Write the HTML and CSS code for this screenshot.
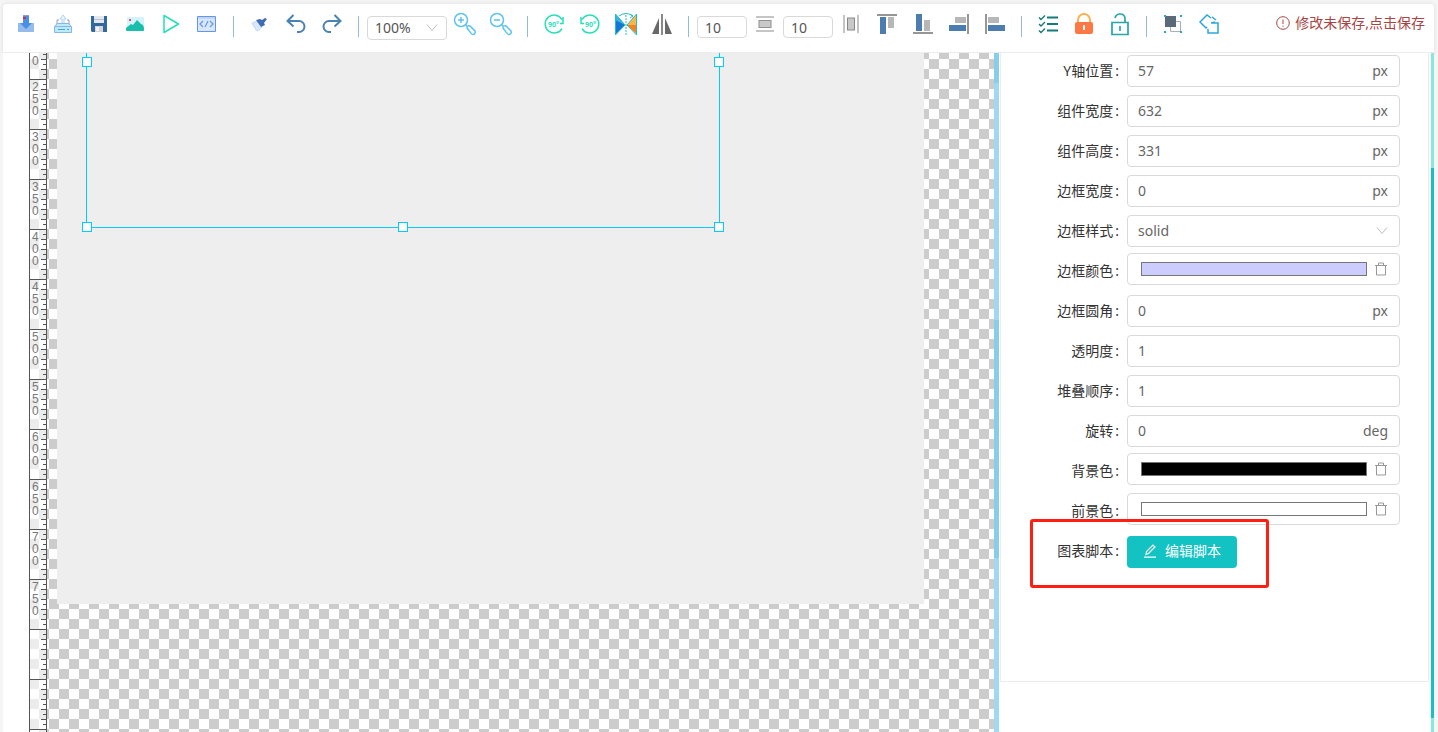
FILE: index.html
```html
<!DOCTYPE html>
<html lang="zh-CN">
<head>
<meta charset="utf-8">
<title>图表设计器</title>
<link rel="stylesheet" href="styles.css">
</head>
<body>
<div class="app">
<header class="toolbar">
  <button class="tool" aria-label="导入"><svg viewBox="0 0 20 20"><path fill="#93bbec" d="M1 9h16v9H1z"/><path fill="#4a90e2" d="M6 2h6v7h3l-6 6-6-6h3z"/><path fill="#8fa0c8" d="M6 1h6v1H6z"/><path fill="#e02b3a" d="M6 3h3v2H6z"/></svg></button>
  <button class="tool" aria-label="导出"><svg viewBox="0 0 20 20" fill="none"><path stroke="#9d96d6" d="M6 6H4v5M14 6h2v5"/><path fill="#eef8fd" stroke="#a9d5f7" d="M10 1l3 4h-2v6H9V5H7z"/><path fill="#b9ecf8" stroke="#8bb4e8" d="M1.500 12.500h17v6h-17zM4 9.500h12l2 3H2z"/><path stroke="#4f9fdc" d="M5 15.500h7M14 15.500h2"/></svg></button>
  <button class="tool" aria-label="保存"><svg viewBox="0 0 20 20"><path fill="#31689f" d="M2 2h16v16H3l-1-1z"/><path fill="#e3e8ef" d="M5 2h10v7H5z"/><path fill="#bac3d0" d="M5 5h10v1H5z"/><path fill="#d6d6d6" d="M6 12h8v6H6z"/><path fill="#f3f3f3" d="M7 13h3v4H7z"/></svg></button>
  <button class="tool" aria-label="图片"><svg viewBox="0 0 20 20"><rect x="2" y="3" width="17" height="14" rx="1" fill="#d5f3fc"/><path fill="#1abfac" d="M1 14l5-4 2 1 4-5 4 4 2 1 1 3v2q0 1-1 1H2q-1 0-1-1z"/><path fill="#e55462" d="M4 5h2v2H4z"/></svg></button>
  <button class="tool" aria-label="预览"><svg viewBox="0 0 20 20"><path fill="none" stroke="#26dfb4" stroke-width="1.500" stroke-linejoin="round" d="M3 1.500v17L17.500 10z"/></svg></button>
  <button class="tool" aria-label="代码"><svg viewBox="0 0 20 20" fill="none" stroke="#6495ed"><path fill="#d8e7fb" d="M.5 2.500h18v15H.5z"/><path d="M1 4h17" stroke="#a9c7f5"/><path stroke-width="1.200" d="M6 7l-3 3 3 3M13 7l3 3-3 3M11 7l-3 6"/></svg></button>
  <span class="sep"></span>
  <button class="tool" aria-label="格式刷"><svg viewBox="0 0 20 20"><path fill="#d9e9fc" stroke="#a8c9ee" stroke-width=".6" d="M2 9l5-2 5 6-4 4-2-1-1-2-1-1z"/><path fill="#3f6cb5" d="M6 6l4-1 2 1 3-2 2 1-3 4 1 2-4 2z"/></svg></button>
  <button class="tool" aria-label="撤销"><svg viewBox="0 0 20 20" fill="none" stroke="#4b82b4" stroke-width="2"><path d="M7.500 1L1.500 7l6 5.500M2 7h11a5.500 5.500 0 0 1 0 11h-2"/></svg></button>
  <button class="tool" aria-label="重做"><svg viewBox="0 0 20 20" fill="none" stroke="#4b82b4" stroke-width="2"><path d="M12.500 1l6 6-6 5.500M18 7H7a5.500 5.500 0 0 0 0 11h2"/></svg></button>
  <span class="sep"></span>
  <div class="picker picker-zoom"><select aria-label="缩放"><option>100%</option></select><svg viewBox="0 0 12 12"><path d="M1 2.500l5 6 5-6"/></svg></div>
  <button class="tool" aria-label="放大"><svg class="big" viewBox="0 0 24 24" fill="none" stroke="#5cc4f0" stroke-width="1.500"><circle cx="8" cy="8" r="6.500"/><path d="M5 8h6M8 5v6M12.500 12.500l2 2M14 16q0-3 3-2l5 5q1 3-2 3.500-1 .5-6-6.500z"/></svg></button>
  <button class="tool" aria-label="缩小"><svg class="big" viewBox="0 0 24 24" fill="none" stroke="#5cc4f0" stroke-width="1.500"><circle cx="8" cy="8" r="6.500"/><path d="M5 8h6M12.500 12.500l2 2M14 16q0-3 3-2l5 5q1 3-2 3.500-1 .5-6-6.500z"/></svg></button>
  <span class="sep"></span>
  <button class="tool" aria-label="顺时针旋转"><svg viewBox="0 0 20 20"><path fill="none" stroke="#2bdfb8" stroke-width="1.500" d="M18 14.500A9 9 0 1 1 18 5.500M19 3v6.500h-3"/><text class="deg" x="4" y="12.500">90°</text></svg></button>
  <button class="tool" aria-label="逆时针旋转"><svg viewBox="0 0 20 20"><path fill="none" stroke="#2bdfb8" stroke-width="1.500" d="M2 14.500A9 9 0 1 0 2 5.500M1 3v6.500h3"/><text class="deg" x="5" y="12.500">90°</text></svg></button>
  <button class="tool" aria-label="水平翻转"><svg class="big" viewBox="0 0 24 24"><path fill="#1477d4" d="M1 2l10 11L1 23z"/><path fill="#35b4e8" d="M1 2l10 11-10-5z"/><path fill="#f7b84b" d="M23 2L13 13l10 10z"/><path fill="#f58220" d="M13 13h9v8z"/><path fill="none" stroke="#26bcc4" d="M1.500 2v21l9.500-10zM22.500 2v21L13 13zM5 4q7-5 14 0M16 2l3 2-3 2"/><path stroke="#26bcc4" stroke-dasharray="2 1" d="M12 3v21"/></svg></button>
  <button class="tool" aria-label="镜像"><svg class="big" viewBox="0 0 24 24"><path fill="#696969" d="M9 6v16H2zM15 6v16h7z"/><path fill="#898989" d="M11 2h2v21h-2z"/></svg></button>
  <span class="sep"></span>
  <input class="num" type="text" value="10" aria-label="垂直间距">
  <button class="tool" aria-label="垂直分布"><svg viewBox="0 0 20 20"><path stroke="#b3b3b3" stroke-width="1.500" d="M1 3h18M1 17h18"/><rect x="4" y="6.500" width="12" height="7" fill="#c9c9c9" stroke="#909090"/></svg></button>
  <input class="num" type="text" value="10" aria-label="水平间距">
  <button class="tool" aria-label="水平分布"><svg viewBox="0 0 20 20"><path stroke="#b3b3b3" stroke-width="1.500" d="M3 1v18M17 1v18"/><rect x="6.500" y="4" width="7" height="12" fill="#c9c9c9" stroke="#888"/></svg></button>
  <button class="tool" aria-label="顶部对齐"><svg viewBox="0 0 20 20"><path fill="#969696" d="M0 0h20v2H0z"/><path fill="#4b7db0" d="M3 3h6v17H3z"/><path fill="#b7b7b7" d="M11 3h6v11h-6z"/></svg></button>
  <button class="tool" aria-label="底部对齐"><svg viewBox="0 0 20 20"><path fill="#969696" d="M0 18h20v2H0z"/><path fill="#4b7db0" d="M3 0h6v17H3z"/><path fill="#b7b7b7" d="M11 6h6v11h-6z"/></svg></button>
  <button class="tool" aria-label="右对齐"><svg viewBox="0 0 20 20"><path fill="#969696" d="M18 0h2v20h-2z"/><path fill="#4b7db0" d="M0 11h17v6H0z"/><path fill="#b7b7b7" d="M6 3h11v6H6z"/></svg></button>
  <button class="tool" aria-label="左对齐"><svg viewBox="0 0 20 20"><path fill="#969696" d="M0 0h2v20H0z"/><path fill="#4b7db0" d="M3 11h17v6H3z"/><path fill="#b7b7b7" d="M3 3h11v6H3z"/></svg></button>
  <span class="sep"></span>
  <button class="tool" aria-label="全选"><svg viewBox="0 0 20 20" fill="none" stroke="#147a7c"><path stroke-width="2" d="M9 3.500h11M9 10h11M9 16.500h11"/><path stroke-width="1.400" d="M1 3.500l2 2 4-4M1 10l2 2 4-4M1 16.500l2 2 4-4"/></svg></button>
  <button class="tool" aria-label="锁定"><svg class="big" viewBox="0 0 24 24"><path fill="none" stroke="#ffb04d" stroke-width="2" d="M6 11V8a6 6 0 0 1 12 0v3"/><rect x="3" y="10" width="18" height="12" rx="2" fill="#ff7744"/><path fill="#fff" d="M11 13h2v5h-2z"/></svg></button>
  <button class="tool" aria-label="解锁"><svg class="big" viewBox="0 0 24 24" fill="none" stroke="#25a8a3" stroke-width="1.700"><path d="M4 10.500h16v12H4zM7 6q1-4 5-4 5 0 5 5v3M12 14v5"/></svg></button>
  <span class="sep"></span>
  <button class="tool" aria-label="组合"><svg viewBox="0 0 20 20"><path fill="none" stroke="#a9b1b8" d="M13 7.500h4.500v10h-10V13"/><path fill="#5b6a7a" d="M2 2h11v11H2z"/><path fill="#2ba4dc" d="M1 1h2v2H1zM17 1h2v2h-2zM1 17h2v2H1zM17 17h2v2h-2z"/></svg></button>
  <button class="tool" aria-label="取消组合"><svg viewBox="0 0 20 20" fill="none" stroke="#2ba6dc" stroke-width="1.500"><path d="M12 4L8 1 1 8l6 6 1-1M13 9h6v10H9v-4M12 9l4-1M13 3l4 3"/></svg></button>
  <button class="unsaved"><svg viewBox="0 0 14 14" fill="none" stroke="#a94442"><circle cx="7" cy="7" r="6.300"/><path d="M7 3.500v4.500M7 9.500v1.200"/></svg>修改未保存,点击保存</button>
</header>
<main class="workspace">
  <div class="ruler">
    <div class="seg first">0</div>
    <div class="seg">2<br>5<br>0</div>
    <div class="seg">3<br>0<br>0</div>
    <div class="seg">3<br>5<br>0</div>
    <div class="seg">4<br>0<br>0</div>
    <div class="seg">4<br>5<br>0</div>
    <div class="seg">5<br>0<br>0</div>
    <div class="seg">5<br>5<br>0</div>
    <div class="seg">6<br>0<br>0</div>
    <div class="seg">6<br>5<br>0</div>
    <div class="seg">7<br>0<br>0</div>
    <div class="seg">7<br>5<br>0</div>
    <div class="seg"></div>
    <div class="seg"></div>
    <div class="seg"></div>
  </div>
  <section class="canvas">
    <div class="sheet">
      <div class="selection">
        <i class="handle ml"></i><i class="handle mr"></i><i class="handle bl"></i><i class="handle bm"></i><i class="handle br"></i>
      </div>
    </div>
  </section>
  <div class="splitter"></div>
  <aside class="panel">
    <form class="props">
      <div class="row"><label for="y">Y轴位置<span>:</span></label><div class="field"><input id="y" type="text" value="57"><span>px</span></div></div>
      <div class="row"><label for="w">组件宽度<span>:</span></label><div class="field"><input id="w" type="text" value="632"><span>px</span></div></div>
      <div class="row"><label for="h">组件高度<span>:</span></label><div class="field"><input id="h" type="text" value="331"><span>px</span></div></div>
      <div class="row"><label for="bw">边框宽度<span>:</span></label><div class="field"><input id="bw" type="text" value="0"><span>px</span></div></div>
      <div class="row"><label for="bs">边框样式<span>:</span></label><div class="field picker"><select id="bs"><option>solid</option></select><svg viewBox="0 0 12 12"><path d="M1 2.500l5 6 5-6"/></svg></div></div>
      <div class="row"><label for="bc">边框颜色<span>:</span></label><div class="field color"><input id="bc" type="color" value="#ccccff"><button type="button" class="trash" aria-label="清除"><svg viewBox="0 0 14 14"><path d="M1 3.500h12M4.500 3V1h5v2M2.500 4v9h9V4"/></svg></button></div></div>
      <div class="row"><label for="rad">边框圆角<span>:</span></label><div class="field"><input id="rad" type="text" value="0"><span>px</span></div></div>
      <div class="row"><label for="op">透明度<span>:</span></label><div class="field"><input id="op" type="text" value="1"></div></div>
      <div class="row"><label for="z">堆叠顺序<span>:</span></label><div class="field"><input id="z" type="text" value="1"></div></div>
      <div class="row"><label for="rot">旋转<span>:</span></label><div class="field"><input id="rot" type="text" value="0"><span>deg</span></div></div>
      <div class="row"><label for="bg">背景色<span>:</span></label><div class="field color"><input id="bg" type="color" value="#000000"><button type="button" class="trash" aria-label="清除"><svg viewBox="0 0 14 14"><path d="M1 3.500h12M4.500 3V1h5v2M2.500 4v9h9V4"/></svg></button></div></div>
      <div class="row"><label for="fg">前景色<span>:</span></label><div class="field color"><input id="fg" type="color" value="#ffffff"><button type="button" class="trash" aria-label="清除"><svg viewBox="0 0 14 14"><path d="M1 3.500h12M4.500 3V1h5v2M2.500 4v9h9V4"/></svg></button></div></div>
      <div class="row marked"><label for="edit">图表脚本<span>:</span></label><button type="button" id="edit" class="primary"><svg viewBox="0 0 14 14"><path d="M1 13.200h12M3 10.500l.5-3L10 1l2 2-6.500 6.500z"/></svg>编辑脚本</button></div>
    </form>
    <div class="scroll"><div class="thumb"></div></div>
  </aside>
</main>
</div>
</body>
</html>
```
FILE: styles.css
```css
*, *::after { box-sizing: border-box; }
body {
  margin: 0;
  background: #f5f5f5;
  font: 14px/20px "Noto Sans", "Noto Sans CJK SC", sans-serif;
  color: #333;
}
button, input, select { font: inherit; color: inherit; }
button { border: 0; padding: 0; background: none; cursor: pointer; }
svg { display: block; flex: none; }

.app {
  height: 100vh;
  padding: 4px 4px 0 3px;
  display: flex;
  flex-direction: column;
  overflow: hidden;
}
.toolbar {
  flex: none;
  height: 49px;
  display: flex;
  align-items: flex-start;
  padding: 0 9px 0 6px;
  background: #fff;
  border-bottom: 1px solid #ececec;
  border-radius: 4px 4px 0 0;
  box-shadow: 0 0 4px #ddd;
}
.tool { flex: none; width: 36px; height: 40px; display: grid; place-items: center; }
.tool svg { width: 20px; height: 20px; }
.tool svg.big { width: 24px; height: 24px; }
.deg { font: bold 7px "Noto Sans", sans-serif; fill: #2bdfb8; }
.sep { flex: none; width: 1px; height: 21px; margin: 12px 8px 0; background: #91b8e8; }
.num {
  flex: none;
  width: 50px;
  height: 22px;
  margin-top: 12px;
  padding: 0 7px;
  border: 1px solid #d9d9d9;
  border-radius: 4px;
  background: #fff;
  color: #555;
}
.picker { display: flex; align-items: center; position: relative; }
.picker select {
  appearance: none;
  width: 100%;
  height: 100%;
  padding: 0 10px;
  border: 0;
  background: none;
  color: #666;
}
.picker svg {
  position: absolute;
  right: 11px;
  width: 12px;
  height: 12px;
  fill: none;
  stroke: #bfbfbf;
  pointer-events: none;
}
.picker-zoom {
  flex: none;
  width: 80px;
  height: 24px;
  margin-top: 12px;
  border: 1px solid #d9d9d9;
  border-radius: 4px;
}
.picker-zoom select { padding: 0 7px; color: #555; }
.picker-zoom svg { right: 8px; }
.unsaved {
  margin: 9px 0 0 auto;
  display: flex;
  align-items: center;
  gap: 5px;
  color: #a94442;
  white-space: nowrap;
}
.unsaved svg { width: 14px; height: 14px; }

.workspace { flex: 1; min-height: 0; display: flex; background: #fff; }

.ruler {
  flex: none;
  width: 18px;
  margin-left: 26px;
  overflow: hidden;
  border-left: 1px solid #555;
  border-right: 1px solid #555;
  background: conic-gradient(#ececec 25%, #fff 0 50%, #ececec 0 75%, #fff 0) -1px -4px / 20px 20px;
}
.seg {
  height: 50px;
  padding: 1px 0 0 2px;
  border-top: 1px solid #555;
  background:
    repeating-linear-gradient(#0000 0 9px, #555 9px 10px) right bottom / 5px 49px no-repeat,
    repeating-linear-gradient(#0000 0 4px, #555 4px 5px) right bottom / 3px 49px no-repeat;
  color: #777;
  font: 12px/12px "Liberation Sans", Arial, sans-serif;
}
.seg.first { height: 26px; padding-top: 2px; border-top: 0; }

.canvas {
  flex: 1;
  min-width: 0;
  overflow: hidden;
  background: conic-gradient(#ccc 25%, #fff 0 50%, #ccc 0 75%, #fff 0) 2px -4px / 20px 20px;
}
.sheet { width: 867px; height: 551px; margin-left: 10px; background: #eee; position: relative; }
.selection {
  position: absolute;
  left: 29px;
  top: -157px;
  width: 634px;
  height: 332px;
  border: 1px solid #0cf;
}
.handle { position: absolute; width: 10px; height: 10px; border: 1px solid #0cf; background: #fff; }
.ml { left: -5px; top: 160px; }
.mr { right: -5px; top: 160px; }
.bl { left: -5px; bottom: -5px; }
.bm { left: 311px; bottom: -5px; }
.br { right: -5px; bottom: -5px; }

.splitter {
  flex: none;
  width: 5px;
  background: linear-gradient(#87ceeb 30px, #a0d8ef 30px 267px, #87ceeb 267px 505px, #a0d8ef 505px);
}

.panel { flex: none; width: 435px; display: flex; align-items: flex-start; overflow: hidden; }
.props {
  flex: 1;
  margin: -2px 2px 0 1px;
  padding: 0 28px 110px 0;
  border: solid #ececec;
  border-width: 0 1px 1px 1px;
}
.row { display: flex; height: 40px; align-items: flex-start; position: relative; }
.row label { flex: none; width: 126px; padding-right: 8px; text-align: right; line-height: 40px; }
.row label span { padding-left: 2px; }
.field {
  flex: 1;
  min-width: 0;
  height: 32px;
  margin-top: 4px;
  display: flex;
  align-items: center;
  border: 1px solid #d9d9d9;
  border-radius: 4px;
  background: #fff;
  color: #666;
}
.field input[type="text"] { flex: 1; min-width: 0; border: 0; padding: 0 10px; background: none; outline: 0; }
.field span { padding-right: 11px; }
.color { margin-top: 2px; padding: 0 11px 0 13px; gap: 7px; }
.color input {
  appearance: none;
  flex: 1;
  min-width: 0;
  height: 14px;
  padding: 0;
  border: 1px solid #767676;
  background: none;
}
.color input::-webkit-color-swatch-wrapper { padding: 0; }
.color input::-webkit-color-swatch { border: 0; border-radius: 0; }
.trash svg { width: 14px; height: 14px; fill: none; stroke: #999; }
.primary {
  height: 32px;
  margin-top: 5px;
  padding: 0 16px 2px;
  display: flex;
  align-items: center;
  gap: 8px;
  border-radius: 4px;
  background: #13c2c2;
  color: #fff;
}
.primary svg { width: 14px; height: 14px; fill: none; stroke: #fff; stroke-width: 1.2; }
.marked::after {
  content: "";
  position: absolute;
  left: 29px;
  top: -12px;
  width: 239px;
  height: 69px;
  border: 3px solid #ff1f12;
  border-radius: 3px;
  pointer-events: none;
}
.scroll { flex: none; width: 3px; height: 100%; padding-top: 115px; background: #87e8de; }
.thumb { height: calc(100% - 14px); background: #13c2c2; }
```
